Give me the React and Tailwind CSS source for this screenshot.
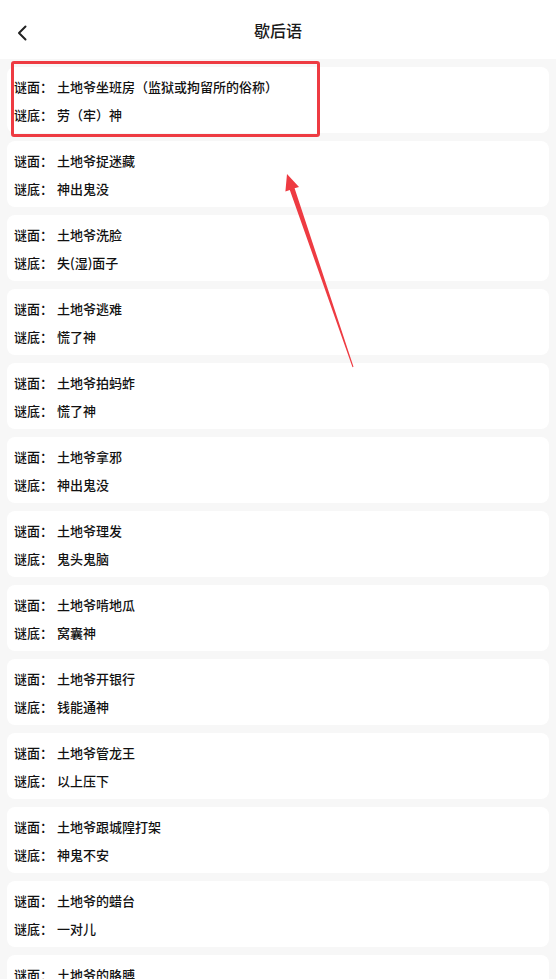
import React from "react";

const items = [
  ["土地爷坐班房（监狱或拘留所的俗称）", "劳（牢）神"],
  ["土地爷捉迷藏", "神出鬼没"],
  ["土地爷洗脸", "失(湿)面子"],
  ["土地爷逃难", "慌了神"],
  ["土地爷拍蚂蚱", "慌了神"],
  ["土地爷拿邪", "神出鬼没"],
  ["土地爷理发", "鬼头鬼脑"],
  ["土地爷啃地瓜", "窝囊神"],
  ["土地爷开银行", "钱能通神"],
  ["土地爷管龙王", "以上压下"],
  ["土地爷跟城隍打架", "神鬼不安"],
  ["土地爷的蜡台", "一对儿"],
  ["土地爷的胳膊", "有里有外"],
];

function Line({ label, text }) {
  return (
    <div className="flex h-[28px] items-center text-[13px] font-medium leading-none text-[#111111]">
      <span>{label}</span>
      <span className="ml-[4px]">{text}</span>
    </div>
  );
}

export default function App() {
  return (
    <div
      className="relative h-[979px] w-[556px] overflow-hidden bg-[#f7f7f7]"
      style={{ fontFamily: '"Noto Sans CJK SC", "Noto Sans", sans-serif' }}
    >
      <header className="relative flex h-[59px] items-center justify-center bg-white">
        <svg
          className="absolute left-[16px] top-[25px]"
          width="12"
          height="16"
          viewBox="0 0 12 16"
          fill="none"
        >
          <path d="M9.5 1.5 L3 8 L9.5 14.5" stroke="#222" strokeWidth="2" strokeLinecap="round" strokeLinejoin="round" />
        </svg>
        <h1 className="text-[16px] font-medium text-[#1a1a1a]">歇后语</h1>
      </header>
      <div className="flex flex-col gap-[8px] px-[7px] pt-[8px]">
        {items.map(([q, a], i) => (
          <div key={i} className="h-[66px] rounded-[8px] bg-white px-[7px] py-[5px]">
            <Line label="谜面：" text={q} />
            <Line label="谜底：" text={a} />
          </div>
        ))}
      </div>
      <div className="pointer-events-none absolute left-[11px] top-[61px] h-[76px] w-[309px] rounded-[3px] border-[3px] border-[#ee3b42]" />
      <svg className="pointer-events-none absolute left-0 top-0" width="556" height="979" viewBox="0 0 556 979">
        <polygon
          points="287,174 299,187 294.6,188.3 353.5,366.8 352.5,367.2 289.8,189.9 285.4,191.5"
          fill="#ee3b42"
        />
      </svg>
    </div>
  );
}
